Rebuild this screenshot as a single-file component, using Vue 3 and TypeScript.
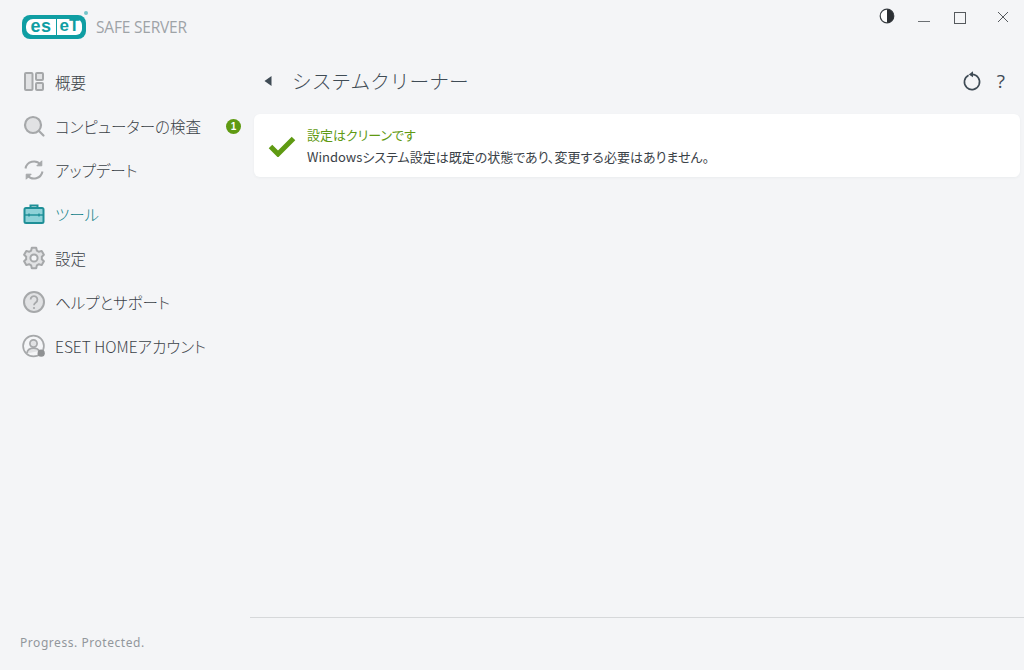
<script setup lang="ts">
interface NavItem {
  key: string
  label: string
  badge?: string
  active?: boolean
}

const items: NavItem[] = [
  { key: 'overview', label: '概要' },
  { key: 'scan', label: 'コンピューターの検査', badge: '1' },
  { key: 'update', label: 'アップデート' },
  { key: 'tools', label: 'ツール', active: true },
  { key: 'settings', label: '設定' },
  { key: 'help', label: 'ヘルプとサポート' },
  { key: 'account', label: 'ESET HOMEアカウント' },
]
</script>

<template>
  <div class="app">
    <aside class="sidebar">
      <div class="brand">
        <div class="logo">
          <span class="logo-es">es</span>
          <span class="logo-et">eT</span>
          <i class="logo-reg"></i>
        </div>
        <span class="product">SAFE SERVER</span>
      </div>

      <nav class="nav">
        <div v-for="item in items" :key="item.key" class="nav-item" :class="{ active: item.active }">
          <svg class="nav-icon" width="24" height="24" viewBox="0 0 24 24">
            <g v-if="item.key === 'overview'" fill="#e1e2e4" stroke="#a6a8aa" stroke-width="2">
              <rect x="3" y="3" width="7.5" height="17" rx="1" />
              <rect x="14" y="3" width="7" height="7" rx="1" />
              <rect x="14" y="13" width="7" height="7" rx="1" />
            </g>
            <g v-else-if="item.key === 'scan'" stroke="#a6a8aa" stroke-width="2.2">
              <circle cx="11" cy="11" r="8" fill="#e1e2e4" />
              <path d="M17 17l4.5 4.5" fill="none" stroke-linecap="round" />
            </g>
            <g v-else-if="item.key === 'update'" fill="none" stroke="#a6a8aa" stroke-width="2">
              <path d="M3.5 10.5A8.6 8.6 0 0 1 18.5 6.5" />
              <path d="M20.5 13.5A8.6 8.6 0 0 1 5.5 17.5" />
              <path d="M19.8 2.8v5h-5z" fill="#a6a8aa" stroke-width="1" />
              <path d="M4.2 21.2v-5h5z" fill="#a6a8aa" stroke-width="1" />
            </g>
            <g v-else-if="item.key === 'tools'" stroke="#1e8f97" stroke-width="2">
              <path d="M8.5 6V3.5h7V6" fill="none" />
              <rect x="2.5" y="6" width="19" height="15" rx="1.5" fill="#8fd2d8" />
              <path d="M2.5 13h19" fill="none" stroke-width="1.4" />
              <path d="M7 11.5v3M17 11.5v3" fill="none" stroke-width="1.4" />
            </g>
            <g v-else-if="item.key === 'settings'" stroke="#a6a8aa" stroke-width="2" fill="#e1e2e4">
              <path
                d="M9.8 1.8h4.4l.7 2.9 2 1.1 2.8-.9 2.2 3.9-2.1 2 .1 1.2-.1 1.2 2.1 2-2.2 3.9-2.8-.9-2 1.1-.7 2.9H9.8l-.7-2.9-2-1.1-2.8.9-2.2-3.9 2.1-2-.1-1.2.1-1.2-2.1-2 2.2-3.9 2.8.9 2-1.1z"
                stroke-linejoin="round"
              />
              <circle cx="12" cy="12" r="3.6" fill="#f4f5f7" />
            </g>
            <g v-else-if="item.key === 'help'" stroke="#a6a8aa">
              <circle cx="12" cy="12" r="10" fill="#e1e2e4" stroke-width="2" />
              <path d="M8.6 9.5a3.4 3.4 0 1 1 5.2 2.9c-1.2.8-1.8 1.4-1.8 2.9" fill="none" stroke-width="1.8" />
              <circle cx="12" cy="18" r="1.1" fill="#a6a8aa" stroke="none" />
            </g>
            <g v-else fill="none" stroke="#a6a8aa" stroke-width="1.7">
              <circle cx="11.5" cy="12" r="10.4" />
              <circle cx="11.5" cy="9.5" r="3.6" fill="#e1e2e4" />
              <path d="M4.8 19.5c.5-3.6 3-5.4 6.7-5.4s5 1.2 5.7 3" fill="#e1e2e4" />
              <circle cx="19.2" cy="19.2" r="3.6" fill="#8f9193" stroke="none" />
            </g>
          </svg>
          <span class="nav-label">{{ item.label }}</span>
          <span v-if="item.badge" class="badge">{{ item.badge }}</span>
        </div>
      </nav>

      <div class="tagline">Progress. Protected.</div>
    </aside>

    <main class="main">
      <div class="window-bar">
        <svg class="win-btn" width="16" height="16" viewBox="0 0 16 16">
          <circle cx="8" cy="8" r="6.8" fill="#fff" stroke="#3a3f44" stroke-width="1.2" />
          <path d="M8 1.2a6.8 6.8 0 0 1 0 13.6z" fill="#2b2f33" />
        </svg>
        <svg class="win-btn min" width="14" height="14" viewBox="0 0 14 14">
          <path d="M1 12.5h12" stroke="#6b6f73" stroke-width="1" fill="none" />
        </svg>
        <svg class="win-btn max" width="12" height="12" viewBox="0 0 12 12">
          <rect x="0.5" y="0.5" width="11" height="11" fill="none" stroke="#55595d" stroke-width="1" />
        </svg>
        <svg class="win-btn close" width="12" height="12" viewBox="0 0 12 12">
          <path d="M1 1l10 10M11 1L1 11" fill="none" stroke="#55595d" stroke-width="1" />
        </svg>
      </div>

      <header class="page-head">
        <svg class="back" width="10" height="12" viewBox="0 0 10 12">
          <path d="M8.5 1v10L1.5 6z" fill="#3f4b55" />
        </svg>
        <h1 class="title">システムクリーナー</h1>
        <svg class="refresh" width="20" height="22" viewBox="0 0 20 22">
          <path d="M6.6 5.2a7.6 7.6 0 1 0 3.4-.8" fill="none" stroke="#3f4b55" stroke-width="1.6" />
          <path d="M11 1.2v6L6.8 4.4z" fill="#3f4b55" />
        </svg>
        <span class="question">?</span>
      </header>

      <section class="card">
        <svg class="check" width="28" height="22" viewBox="0 0 28 22">
          <path d="M2.5 11.5l7.5 7.5L25.5 3.5" fill="none" stroke="#5f9a12" stroke-width="5" />
        </svg>
        <div class="card-text">
          <div class="card-title">設定はクリーンです</div>
          <div class="card-body">Windowsシステム設定は既定の状態であり、変更する必要はありません。</div>
        </div>
      </section>

      <div class="grow"></div>
      <div class="bottom-bar"></div>
    </main>
  </div>
</template>

<style>
html,
body {
  margin: 0;
  background: #f4f5f7;
}
</style>

<style scoped>
.app {
  display: flex;
  width: 1024px;
  height: 670px;
  overflow: hidden;
  background: #f4f5f7;
  color: #3b4248;
  font-family: "Noto Sans CJK JP", "Noto Sans", sans-serif;
  font-feature-settings: "palt";
}

.sidebar {
  display: flex;
  flex-direction: column;
  flex: 0 0 250px;
}

.brand {
  display: flex;
  align-items: center;
  gap: 10px;
  height: 30px;
  padding: 12px 0 18px 22px;
}

.logo {
  position: relative;
  display: flex;
  align-items: center;
  gap: 1px;
  box-sizing: border-box;
  width: 64px;
  height: 24px;
  padding: 0 3px 0 4px;
  border-radius: 8px;
  background: #0f9ea3;
  font-family: "Liberation Sans", sans-serif;
  font-weight: 700;
  color: #0f9ea3;
}

.logo-es,
.logo-et {
  display: block;
  height: 16px;
  font-size: 18px;
  line-height: 14px;
  background: #fff;
  text-align: center;
}

.logo-es {
  width: 30px;
  border-radius: 7px 0 0 7px;
  letter-spacing: 0.5px;
}

.logo-et {
  width: 25px;
  border-radius: 0 6px 6px 0;
  font-size: 17px;
}

.logo-reg {
  position: absolute;
  top: -4px;
  right: -2px;
  width: 4px;
  height: 4px;
  border-radius: 50%;
  background: #74c5ca;
}

.product {
  font-family: "Open Sans", sans-serif;
  font-size: 15.5px;
  color: #9ea3a7;
  letter-spacing: -0.2px;
}

.nav {
  display: flex;
  flex-direction: column;
}

.nav-item {
  display: flex;
  align-items: center;
  height: 44px;
  padding-left: 22px;
}

.nav-icon {
  flex: none;
}

.nav-label {
  margin-left: 9px;
  font-size: 15.5px;
  font-weight: 300;
  color: #3b4248;
  white-space: nowrap;
}

.nav-item.active .nav-label {
  color: #14838a;
}

.badge {
  display: flex;
  align-items: center;
  justify-content: center;
  width: 15px;
  height: 15px;
  margin-left: 25px;
  border-radius: 50%;
  background: #5f9a12;
  color: #fff;
  font-family: "Liberation Sans", sans-serif;
  font-size: 10px;
  font-weight: 700;
}

.tagline {
  margin-top: auto;
  padding: 0 0 18px 20px;
  font-family: "Noto Sans", sans-serif;
  font-size: 12px;
  line-height: 18px;
  letter-spacing: 0.55px;
  color: #92979c;
}

.main {
  display: flex;
  flex: 1;
  flex-direction: column;
  min-width: 0;
}

.window-bar {
  display: flex;
  align-items: flex-start;
  justify-content: flex-end;
  height: 60px;
  padding: 8px 15px 0 0;
  box-sizing: border-box;
}

.win-btn.min {
  margin-left: 22px;
  margin-top: 1px;
}

.win-btn.max {
  margin-left: 23px;
  margin-top: 4px;
}

.win-btn.close {
  margin-left: 31px;
  margin-top: 3px;
}

.page-head {
  display: flex;
  align-items: center;
  height: 42px;
  padding: 0 19px 0 13px;
}

.back {
  flex: none;
}

.title {
  flex: 1;
  margin: 0 0 0 19px;
  font-size: 19.7px;
  font-weight: 300;
  font-feature-settings: normal;
  line-height: 42px;
  color: #3f4b55;
}

.refresh {
  margin-right: 15px;
}

.question {
  font-family: "Open Sans", sans-serif;
  font-size: 19px;
  color: #3f4b55;
}

.grow {
  flex: 1;
}

.card {
  display: flex;
  align-items: center;
  box-sizing: border-box;
  height: 63px;
  margin: 12px 4px 0;
  padding: 0 0 0 14px;
  border-radius: 6px;
  background: #fff;
  box-shadow: 0 1px 3px rgba(60, 70, 80, 0.05);
}

.check {
  flex: none;
}

.card-text {
  margin-left: 11px;
  font-size: 13px;
  line-height: 22px;
}

.card-title {
  color: #5f9a12;
}

.card-body {
  color: #3b4248;
}

.bottom-bar {
  height: 52px;
  border-top: 1px solid #d6d8da;
}
</style>
